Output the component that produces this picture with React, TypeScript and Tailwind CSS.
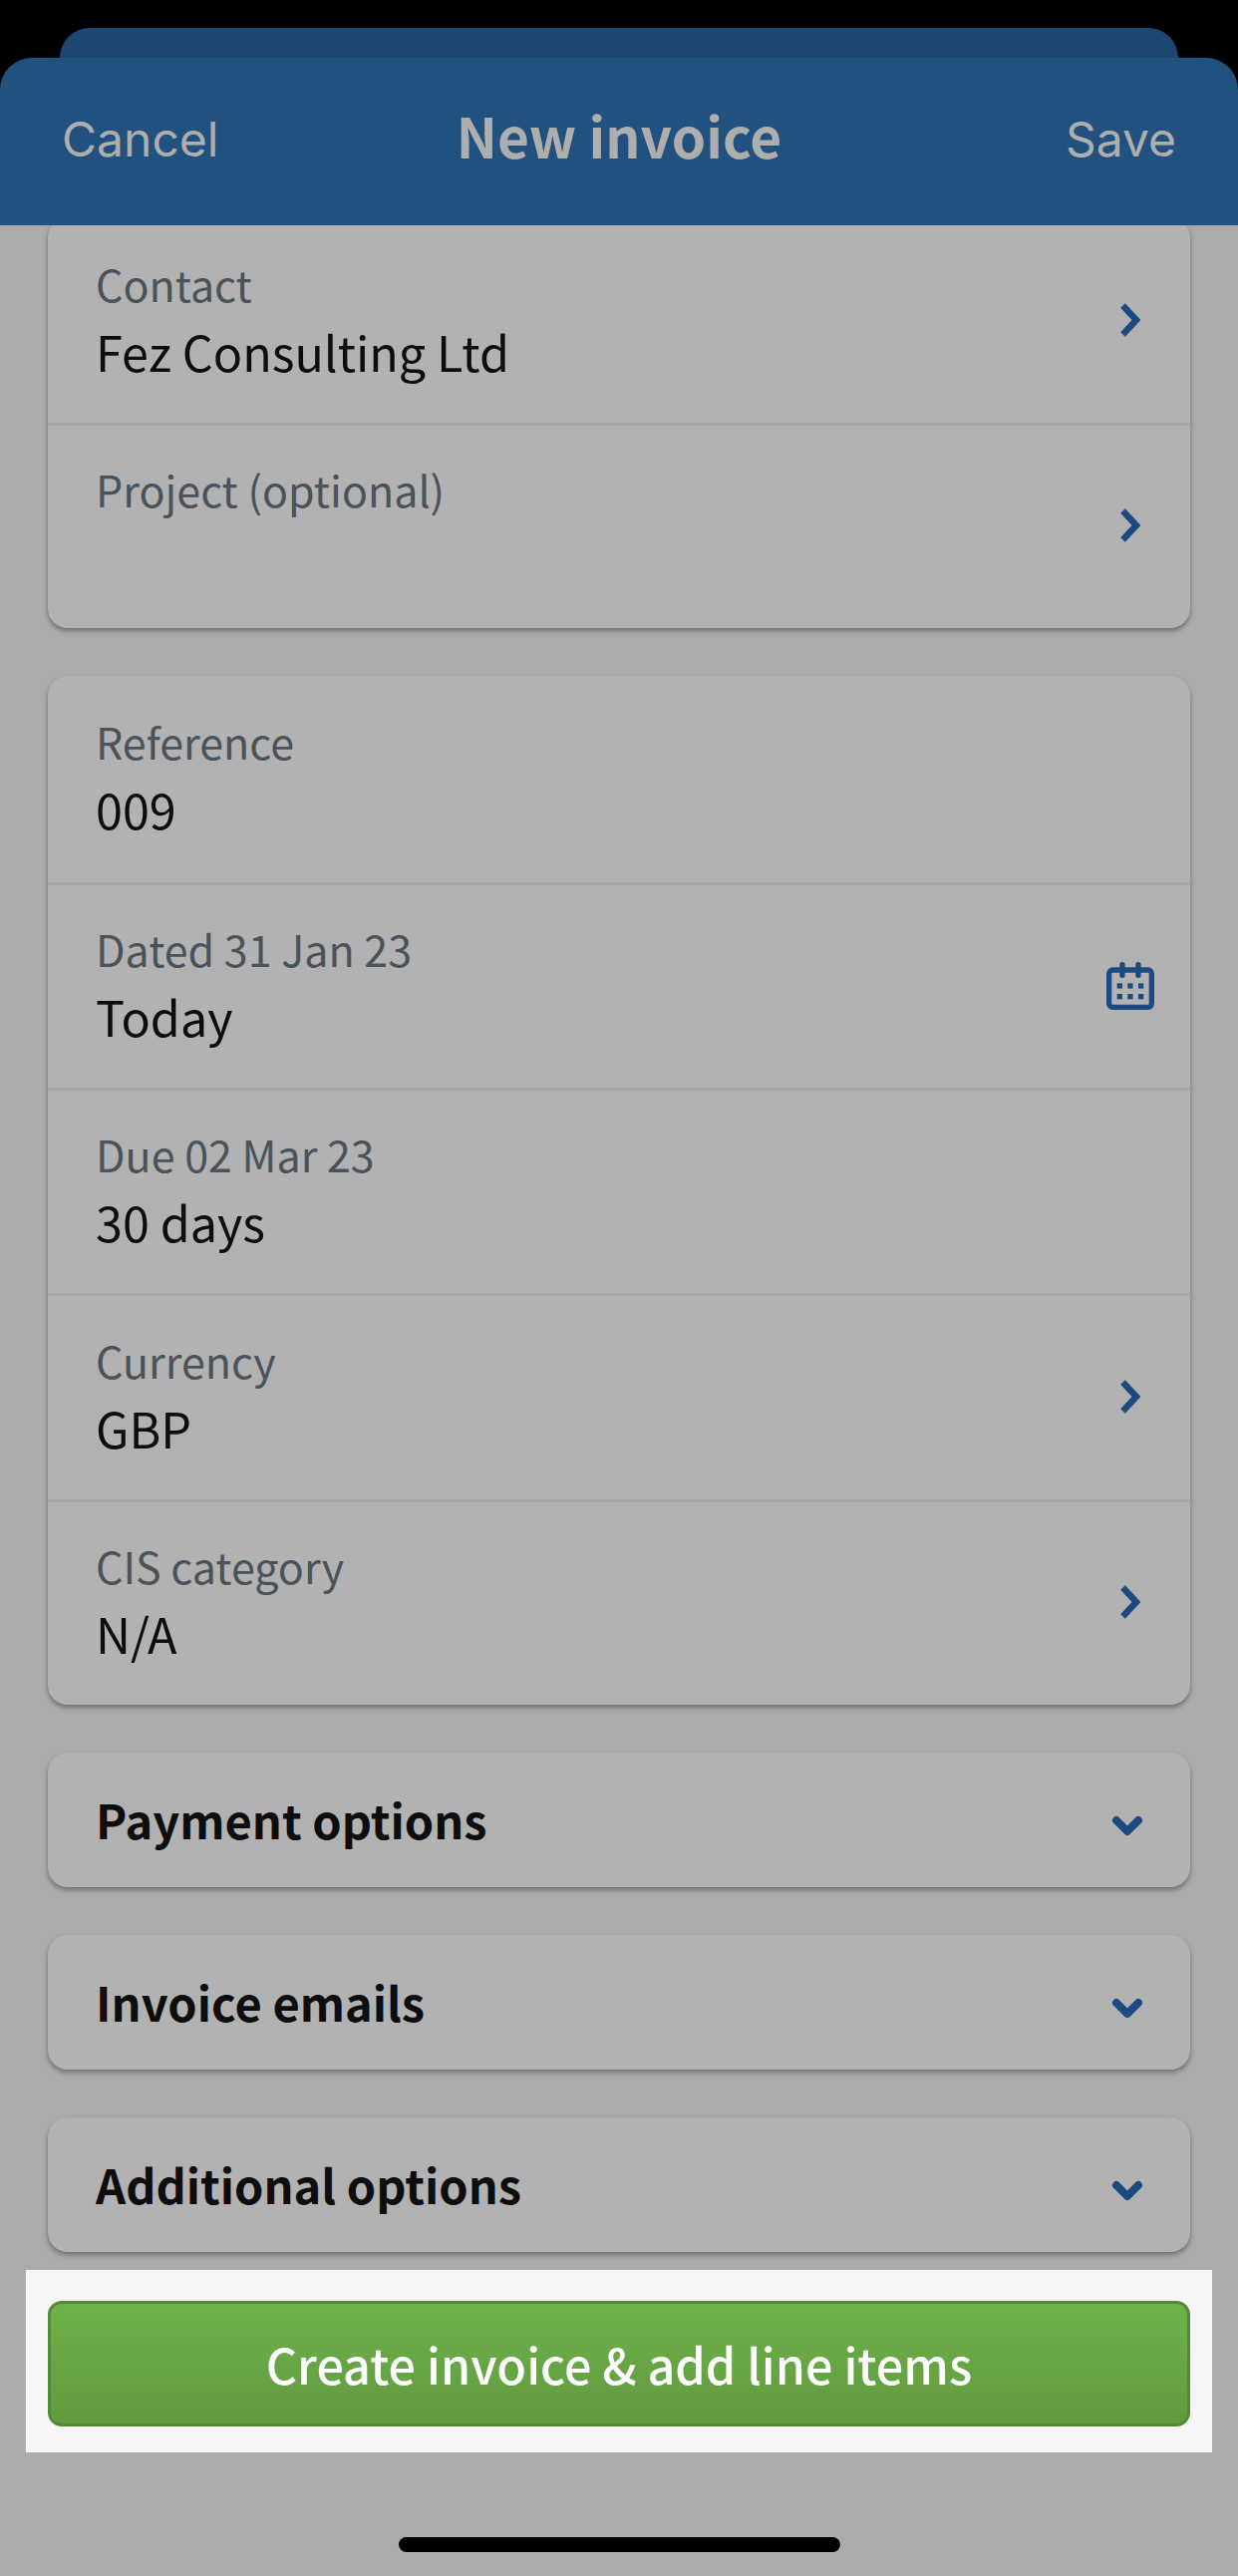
function ChevronRight() {
  return (
    <svg width="24" height="36" viewBox="0 0 24 36" fill="none" className="text-[#1a4a80]">
      <path d="M4.5 3.5 L18 18 L4.5 32.5" stroke="currentColor" strokeWidth="6.5" strokeLinejoin="miter" />
    </svg>
  )
}

function ChevronDown() {
  return (
    <svg width="32" height="24" viewBox="0 0 32 24" fill="none" className="mt-[13px] text-[#1a4a80]">
      <path d="M5 6 L16 17 L27 6" stroke="currentColor" strokeWidth="8" strokeLinecap="round" strokeLinejoin="round" />
    </svg>
  )
}

function CalendarIcon() {
  return (
    <svg width="48" height="48" viewBox="0 0 48 48" fill="none" className="text-[#1a4a80]">
      <rect x="2.65" y="8" width="42.7" height="37.35" rx="3.5" stroke="currentColor" strokeWidth="5.3" />
      <rect x="13.3" y="0" width="5.3" height="16" rx="2.65" fill="currentColor" />
      <rect x="29.3" y="0" width="5.3" height="16" rx="2.65" fill="currentColor" />
      <rect x="10.7" y="21.3" width="5.3" height="5.3" fill="currentColor" />
      <rect x="21.3" y="21.3" width="5.3" height="5.3" fill="currentColor" />
      <rect x="32" y="21.3" width="5.3" height="5.3" fill="currentColor" />
      <rect x="10.7" y="32" width="5.3" height="5.3" fill="currentColor" />
      <rect x="21.3" y="32" width="5.3" height="5.3" fill="currentColor" />
      <rect x="32" y="32" width="5.3" height="5.3" fill="currentColor" />
    </svg>
  )
}

interface RowProps {
  label: string
  value?: string
  icon?: React.ReactNode
  first?: boolean
}

function Row({ label, value, icon, first }: RowProps) {
  return (
    <div className={`flex h-[206.4px] items-center justify-between pl-[48px] ${first ? '' : 'border-t-[3px] border-[#a9a9a9]'}`}>
      <div className="pb-[9px]">
        <div className="h-[68px] text-[43px] leading-[68px] text-[#4b535a]">{label}</div>
        <div className="h-[68px] text-[48.5px] leading-[68px] text-[#0d0d0d]">{value}</div>
      </div>
      {icon}
    </div>
  )
}

function Arrow() {
  return <div className="mb-[3px] mr-[48px] flex"><ChevronRight /></div>
}

function Accordion({ title }: { title: string }) {
  return (
    <div className="flex h-[135px] items-center justify-between rounded-[20px] bg-[#b2b2b2] pl-[48px] pr-[47px] shadow-[0_3px_5px_rgba(0,0,0,0.35)]">
      <span className="text-[47px] font-bold text-[#0d0d0d]">{title}</span>
      <ChevronDown />
    </div>
  )
}

export default function App() {
  return (
    <div className="relative h-[2584px] w-[1242px] overflow-hidden bg-[#ababab] font-['Noto_Sans_CJK_SC',sans-serif]">
      <div className="bg-black px-[60px] pt-[28px]">
        <div className="h-[30px] rounded-t-[32px] bg-[#1d4770]" />
      </div>
      <div className="bg-black">
        <div className="relative z-10 flex h-[168px] items-center rounded-t-[32px] bg-[#21517f] px-[62px] pb-[14px] text-[#aeaeae]">
          <span className="mt-[10px] flex-1 font-['Inter',sans-serif] text-[48px]">Cancel</span>
          <span className="text-[55px] font-semibold">New invoice</span>
          <span className="mt-[10px] flex-1 text-right font-['Inter',sans-serif] text-[48px]">Save</span>
        </div>
      </div>

      <div className="mt-[-8.5px] flex flex-col gap-[48px] px-[48px]">
        <div className="rounded-[20px] bg-[#b2b2b2] shadow-[0_3px_5px_rgba(0,0,0,0.35)]">
          <Row label="Contact" value="Fez Consulting Ltd" icon={<Arrow />} />
          <Row label="Project (optional)" icon={<Arrow />} />
        </div>
        <div className="rounded-[20px] bg-[#b2b2b2] shadow-[0_3px_5px_rgba(0,0,0,0.35)]">
          <Row label="Reference" value="009" first />
          <Row label="Dated 31 Jan 23" value="Today" icon={<div className="mr-[36px] flex"><CalendarIcon /></div>} />
          <Row label="Due 02 Mar 23" value="30 days" />
          <Row label="Currency" value="GBP" icon={<Arrow />} />
          <Row label="CIS category" value="N/A" icon={<Arrow />} />
        </div>
        <Accordion title="Payment options" />
        <Accordion title="Invoice emails" />
        <Accordion title="Additional options" />
      </div>

      <div className="mx-[26px] mt-[18px] bg-[#f6f6f6] px-[22px] pb-[26px] pt-[31px]">
        <div className="flex h-[126px] items-center justify-center rounded-[14px] border-[3px] border-[#528a35] bg-gradient-to-b from-[#6eb24a] to-[#619a3f] text-[48.5px] font-medium text-white">
          Create invoice &amp; add line items
        </div>
      </div>

      <div className="mx-auto mt-[85px] h-[15px] w-[443px] rounded-full bg-black" />
    </div>
  )
}
